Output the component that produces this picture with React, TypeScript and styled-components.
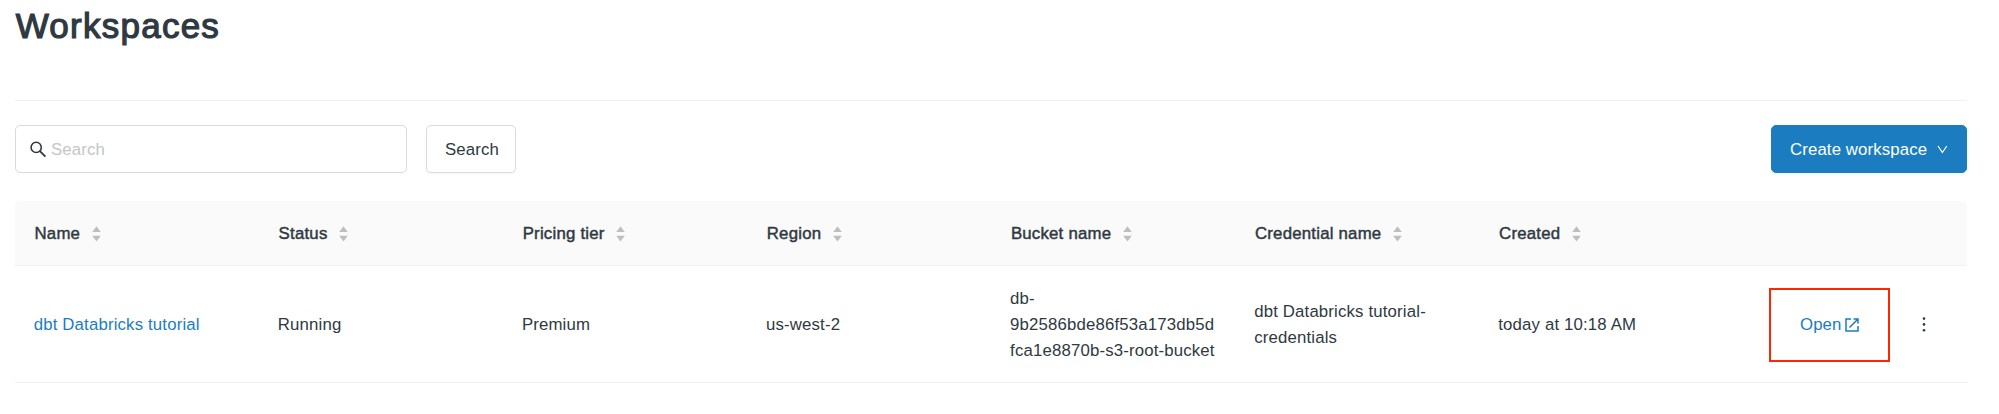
import React from "react";
import styled, { createGlobalStyle } from "styled-components";

const GlobalStyle = createGlobalStyle`
  * { box-sizing: border-box; }
  body {
    margin: 0;
    background: #fff;
    color: #2f3941;
    font: 16.8px/26px "Liberation Sans", Arial, sans-serif;
    letter-spacing: 0.12px;
  }
`;

const Page = styled.main`
  width: 1999px;
  height: 414px;
  overflow: hidden;
  padding: 0 32px 0 15px;
`;

const PageHeader = styled.header`
  height: 101px;
  padding-top: 5px;
  border-bottom: 1px solid #f0f0f0;
`;

const Title = styled.h1`
  margin: 0;
  padding-left: 0.7px;
  font-size: 35px;
  line-height: 42px;
  font-weight: 400;
  letter-spacing: 1.25px;
  -webkit-text-stroke: 1.2px currentColor;
`;

const Toolbar = styled.div`
  display: flex;
  align-items: center;
  height: 100px;
  padding-bottom: 4px;
`;

const SearchField = styled.label`
  display: flex;
  align-items: center;
  width: 392px;
  height: 48px;
  margin-right: 19px;
  padding-left: 14px;
  border: 1px solid #d9dadb;
  border-radius: 5px;
`;

const SearchInput = styled.input`
  flex: 1;
  min-width: 0;
  margin-left: 4px;
  padding: 1px 0 0;
  border: 0;
  outline: 0;
  background: none;
  font: inherit;
  letter-spacing: inherit;
  &::placeholder { color: #c4c6c8; opacity: 1; }
`;

const Button = styled.button<{ $primary?: boolean }>`
  display: flex;
  align-items: center;
  gap: 10px;
  height: 48px;
  width: ${(p) => (p.$primary ? "196px" : "90px")};
  margin-left: ${(p) => (p.$primary ? "auto" : "0")};
  padding: 1px 0 0 18px;
  border: 1px solid ${(p) => (p.$primary ? "#1b7dbf" : "#d9dadb")};
  border-radius: 5px;
  background: ${(p) => (p.$primary ? "#1b7dbf" : "#fff")};
  color: ${(p) => (p.$primary ? "#fff" : "inherit")};
  box-shadow: 0 2px 1px rgba(0, 0, 0, 0.02);
  font: inherit;
  letter-spacing: inherit;
  white-space: nowrap;
`;

const Row = styled.div<{ $head?: boolean }>`
  display: grid;
  grid-template-columns: repeat(7, 244.1px) 1fr;
  align-items: center;
  height: ${(p) => (p.$head ? "65px" : "117px")};
  border-bottom: 1px solid #f0f0f0;
  border-radius: ${(p) => (p.$head ? "5px 5px 0 0" : "0")};
  background: ${(p) => (p.$head ? "#fafafa" : "#fff")};
`;

const HeadCell = styled.div`
  display: flex;
  align-items: center;
  gap: 11.5px;
  padding: 2px 0 0 19.5px;
  letter-spacing: 0.22px;
  -webkit-text-stroke: 0.45px currentColor;
`;

const Cell = styled.div`
  padding: 1px 0 0 18.7px;
  letter-spacing: 0.16px;
  white-space: nowrap;
`;

const Link = styled.a`
  color: #1b7dbf;
`;

const Actions = styled.div`
  display: flex;
  align-items: center;
  justify-content: flex-end;
  padding: 1px 41px 0 0;
  gap: 63px;
`;

const OpenLink = styled(Link)`
  position: relative;
  display: flex;
  align-items: center;
  gap: 3.5px;
`;

const Highlight = styled.span`
  position: absolute;
  right: -31px;
  top: -23.5px;
  width: 121px;
  height: 74px;
  border: 2px solid #ff2600;
`;

const SearchIcon = () => (
  <svg width="17" height="17" viewBox="0 0 17 17" fill="none" stroke="#2f3941" strokeWidth="1.6">
    <circle cx="6.2" cy="6.4" r="5.1" />
    <path d="M9.9 10.1L15.4 15.6" strokeWidth="1.8" />
  </svg>
);

const SortIcon = () => (
  <svg width="9" height="16" viewBox="0 0 9 16" fill="#bfbfbf">
    <path d="M4.5 0.2L8.8 6H0.2zM0.2 9.8H8.8L4.5 15.6z" />
  </svg>
);

const ChevronIcon = () => (
  <svg width="11" height="9" viewBox="0 0 11 9" fill="none" stroke="#fff" strokeWidth="1.2">
    <path d="M1 1L5.4 7.5L9.8 1" />
  </svg>
);

const ExternalIcon = () => (
  <svg width="14" height="14" viewBox="0 0 14 14" fill="none" stroke="#1b7dbf" strokeWidth="1.5">
    <path d="M6 1H1V13H13V8M8.5 1H13V5.5M13 1L4.5 9.5" />
  </svg>
);

const MoreIcon = () => (
  <svg width="4" height="16" viewBox="0 0 4 16" fill="#2f3941">
    <circle cx="2" cy="1.6" r="1.3" />
    <circle cx="2" cy="7.4" r="1.3" />
    <circle cx="2" cy="13.2" r="1.3" />
  </svg>
);

const columns = ["Name", "Status", "Pricing tier", "Region", "Bucket name", "Credential name", "Created"];

export default function App() {
  return (
    <>
      <GlobalStyle />
      <Page>
        <PageHeader>
          <Title>Workspaces</Title>
        </PageHeader>
        <Toolbar>
          <SearchField>
            <SearchIcon />
            <SearchInput placeholder="Search" />
          </SearchField>
          <Button>Search</Button>
          <Button $primary>
            Create workspace
            <ChevronIcon />
          </Button>
        </Toolbar>
        <Row $head>
          {columns.map((name) => (
            <HeadCell key={name}>
              {name}
              <SortIcon />
            </HeadCell>
          ))}
        </Row>
        <Row>
          <Cell>
            <Link>dbt Databricks tutorial</Link>
          </Cell>
          <Cell>Running</Cell>
          <Cell>Premium</Cell>
          <Cell>us-west-2</Cell>
          <Cell>
            db-
            <br />
            9b2586bde86f53a173db5d
            <br />
            fca1e8870b-s3-root-bucket
          </Cell>
          <Cell>
            dbt Databricks tutorial-
            <br />
            credentials
          </Cell>
          <Cell>today at 10:18 AM</Cell>
          <Actions>
            <OpenLink>
              Open
              <ExternalIcon />
              <Highlight />
            </OpenLink>
            <MoreIcon />
          </Actions>
        </Row>
      </Page>
    </>
  );
}
